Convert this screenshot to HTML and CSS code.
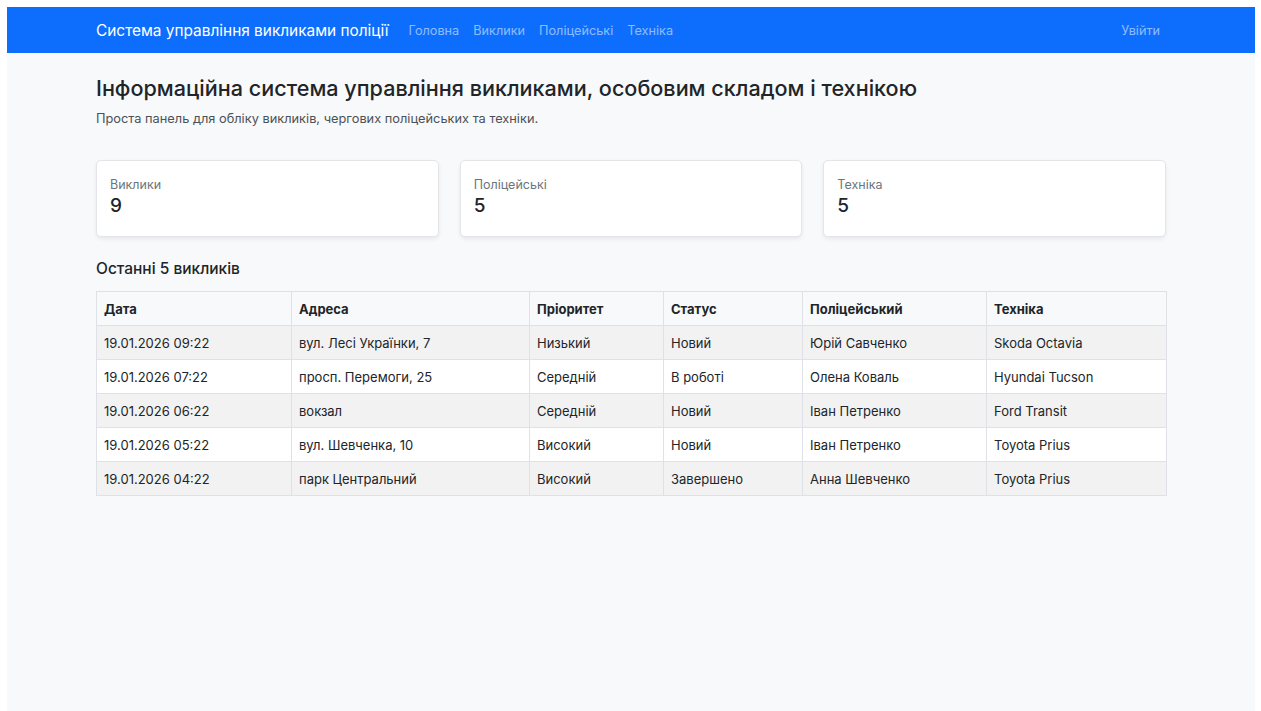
FILE: index.html
```html
<!DOCTYPE html>
<html lang="uk">
<head>
<meta charset="utf-8">
<title>Система управління викликами поліції</title>
<link rel="stylesheet" href="styles.css">
</head>
<body>
<nav class="navbar">
  <div class="container nav-inner">
    <a class="brand" href="#">Система управління викликами поліції</a>
    <ul class="nav-links">
      <li><a href="#">Головна</a></li>
      <li><a href="#">Виклики</a></li>
      <li><a href="#">Поліцейські</a></li>
      <li><a href="#">Техніка</a></li>
    </ul>
    <a class="nav-login" href="#">Увійти</a>
  </div>
</nav>

<main class="container main">
  <h1 class="title">Інформаційна система управління викликами, особовим складом і технікою</h1>
  <p class="lead">Проста панель для обліку викликів, чергових поліцейських та техніки.</p>

  <section class="stats">
    <div class="card">
      <div class="card-label">Виклики</div>
      <div class="card-value">9</div>
    </div>
    <div class="card">
      <div class="card-label">Поліцейські</div>
      <div class="card-value">5</div>
    </div>
    <div class="card">
      <div class="card-label">Техніка</div>
      <div class="card-value">5</div>
    </div>
  </section>

  <h2 class="section-title">Останні 5 викликів</h2>
  <table class="calls">
    <colgroup>
      <col class="c-date"><col class="c-addr"><col class="c-prio"><col class="c-status"><col class="c-officer"><col class="c-vehicle">
    </colgroup>
    <thead>
      <tr><th>Дата</th><th>Адреса</th><th>Пріоритет</th><th>Статус</th><th>Поліцейський</th><th>Техніка</th></tr>
    </thead>
    <tbody>
      <tr><td>19.01.2026 09:22</td><td>вул. Лесі Українки, 7</td><td>Низький</td><td>Новий</td><td>Юрій Савченко</td><td>Skoda Octavia</td></tr>
      <tr><td>19.01.2026 07:22</td><td>просп. Перемоги, 25</td><td>Середній</td><td>В роботі</td><td>Олена Коваль</td><td>Hyundai Tucson</td></tr>
      <tr><td>19.01.2026 06:22</td><td>вокзал</td><td>Середній</td><td>Новий</td><td>Іван Петренко</td><td>Ford Transit</td></tr>
      <tr><td>19.01.2026 05:22</td><td>вул. Шевченка, 10</td><td>Високий</td><td>Новий</td><td>Іван Петренко</td><td>Toyota Prius</td></tr>
      <tr><td>19.01.2026 04:22</td><td>парк Центральний</td><td>Високий</td><td>Завершено</td><td>Анна Шевченко</td><td>Toyota Prius</td></tr>
    </tbody>
  </table>
</main>
</body>
</html>
```

FILE: styles.css
```css
html {
  background: #ffffff;
}

body {
  margin: 7px 6px 0 7px;
  min-height: 704px;
  background: #f8f9fa;
  font-family: Inter, "Noto Sans", "Liberation Sans", sans-serif;
  color: #212529;
}

.container {
  width: 1070px;
  margin: 0 auto;
}

/* top bar */
.navbar {
  background: #0d6efd;
  height: 46px;
}

.nav-inner {
  display: flex;
  align-items: center;
  height: 100%;
}

.brand {
  color: #ffffff;
  text-decoration: none;
  font-size: 15.4px;
  margin-right: 13px;
}

.nav-links {
  display: flex;
  list-style: none;
  margin: 0;
  padding: 0;
}

.nav-links a,
.nav-login {
  display: block;
  color: rgba(255, 255, 255, 0.55);
  text-decoration: none;
  font-size: 12.7px;
  padding: 0 7px;
}

.nav-login {
  margin-left: auto;
  padding-right: 6px;
}

/* header text */
.main {
  padding-top: 21px;
}

.title {
  font-size: 21.6px;
  font-weight: 500;
  margin: 0;
  line-height: 28px;
}

.lead {
  font-size: 12.8px;
  color: #4b5157;
  margin: 7px 0 0;
  line-height: 20px;
}

/* counters */
.stats {
  display: grid;
  grid-template-columns: repeat(3, 1fr);
  gap: 21px;
  margin-top: 31px;
}

.card {
  background: #ffffff;
  border: 1px solid #e3e5e8;
  border-radius: 5px;
  box-shadow: 0 2px 4px rgba(0, 0, 0, 0.07);
  height: 77px;
  box-sizing: border-box;
  padding: 15px 13px;
}

.card-label {
  font-size: 12.5px;
  color: #6c757d;
  line-height: 18px;
}

.card-value {
  font-size: 19px;
  line-height: 24px;
  font-weight: 500;
}

/* recent calls */
.section-title {
  font-size: 15.5px;
  font-weight: 500;
  margin: 22px 0 12px;
  line-height: 20px;
}

.calls {
  width: 100%;
  border-collapse: collapse;
  table-layout: fixed;
  font-size: 13px;
}

.c-date { width: 195px; }
.c-addr { width: 238px; }
.c-prio { width: 134px; }
.c-status { width: 139px; }
.c-officer { width: 184px; }
.c-vehicle { width: 180px; }

.calls th,
.calls td {
  border: 1px solid #dee2e6;
  height: 34px;
  box-sizing: border-box;
  padding: 0 7px;
  text-align: left;
}

.calls th {
  background: #f8f9fa;
  font-weight: 700;
}

.calls tbody tr:nth-child(odd) td {
  background: #f2f2f2;
}

.calls tbody tr:nth-child(even) td {
  background: #ffffff;
}
```
